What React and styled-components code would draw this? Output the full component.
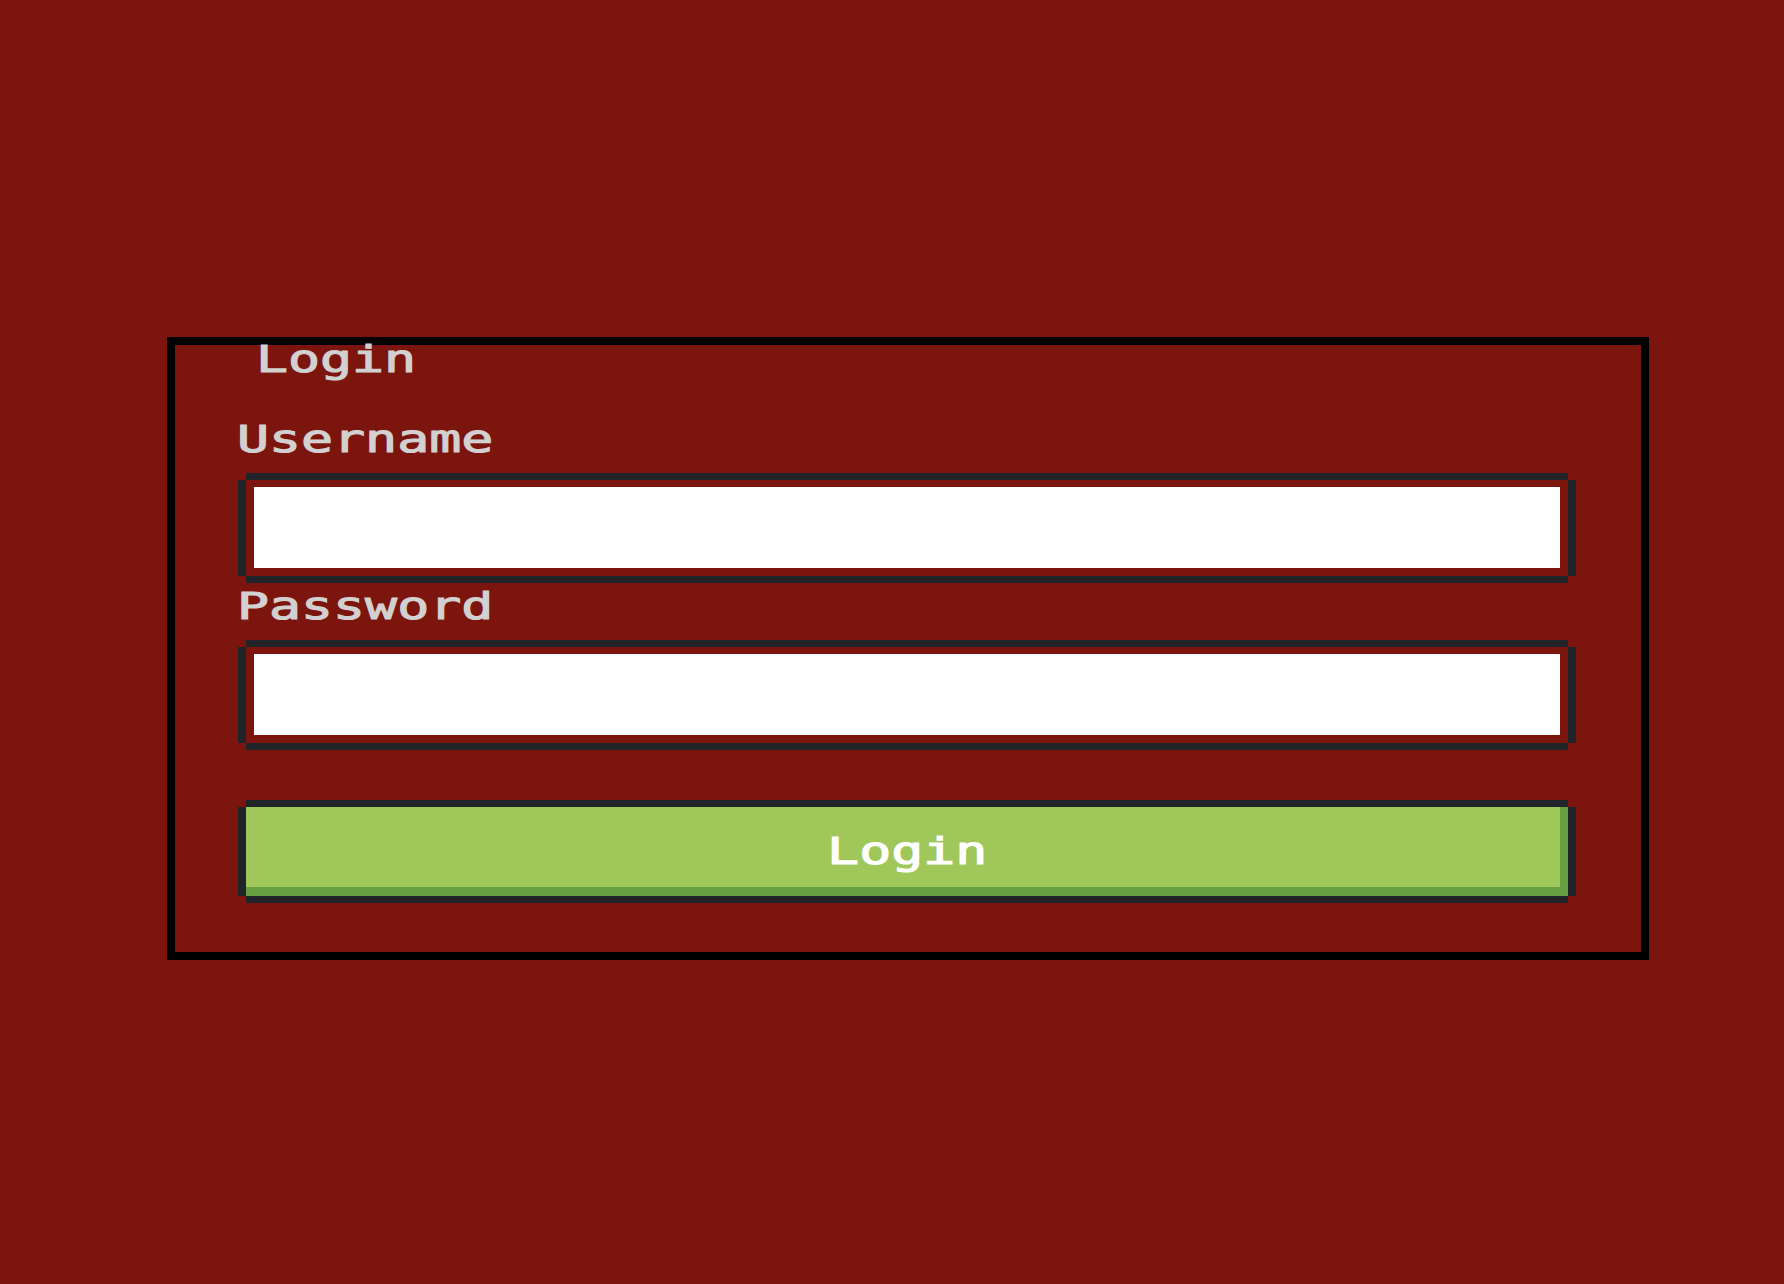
import styled, { createGlobalStyle } from 'styled-components'

const GlobalStyle = createGlobalStyle`
  html, body {
    margin: 0;
    padding: 0;
    background: #7b150e;
  }
  body {
    min-height: 1284px;
    font-family: "DejaVu Sans Mono", "Liberation Mono", monospace;
  }
`

const Page = styled.div`
  padding: 337px 0 0 167px;
`

const Card = styled.form`
  box-sizing: border-box;
  width: 1482px;
  height: 623px;
  border: 8px solid #000;
  padding: 0 65px 0 63px;
  display: flex;
  flex-direction: column;
  align-items: flex-start;
`

// wide blocky monospace, stretched to look like the 8-bit font
const PixelText = styled.div`
  width: max-content;
  font-family: "DejaVu Sans Mono", "Liberation Mono", monospace;
  font-weight: normal;
  font-size: 38px;
  line-height: 28px;
  height: 28px;
  letter-spacing: 0;
  color: #d2d0d0;
  white-space: nowrap;
  transform: scaleX(1.4);
  transform-origin: left top;
  -webkit-text-stroke: 1.1px currentColor;
`

const Title = styled(PixelText)`
  margin-left: 18px;
`

const Label = styled(PixelText).attrs({ as: 'label' })`
  display: block;
  margin: ${p => p.$top}px 0 0 -1px;
`

const Frame = styled.div`
  align-self: stretch;
  margin: 27px 8px 0;
  padding: 7px 8px 8px;
  box-shadow: 0 -7px 0 0 #212529, 0 7px 0 0 #212529, -8px 0 0 0 #212529, 8px 0 0 0 #212529;
`

const Input = styled.input`
  display: block;
  box-sizing: border-box;
  width: 100%;
  height: 81px;
  margin: 0;
  border: none;
  outline: none;
  background: #fff;
  padding: 0 16px;
  font-family: "DejaVu Sans Mono", monospace;
  font-size: 32px;
`

const Button = styled.button`
  align-self: stretch;
  margin: 64px 8px 0;
  height: 89px;
  border: none;
  padding: 0;
  background: #9fc75a;
  box-shadow: inset -8px -9px 0 0 #66a043, 0 -7px 0 0 #212529, 0 7px 0 0 #212529, -8px 0 0 0 #212529, 8px 0 0 0 #212529;
  cursor: pointer;
`

const ButtonText = styled(PixelText).attrs({ as: 'span' })`
  display: inline-block;
  color: #fff;
  transform-origin: center top;
`

export default function App() {
  return (
    <Page>
      <GlobalStyle />
      <Card onSubmit={e => e.preventDefault()}>
        <Title>Login</Title>
        <Label $top={52} htmlFor="username">Username</Label>
        <Frame>
          <Input id="username" type="text" />
        </Frame>
        <Label $top={16} htmlFor="password">Password</Label>
        <Frame>
          <Input id="password" type="password" />
        </Frame>
        <Button type="submit">
          <ButtonText>Login</ButtonText>
        </Button>
      </Card>
    </Page>
  )
}
